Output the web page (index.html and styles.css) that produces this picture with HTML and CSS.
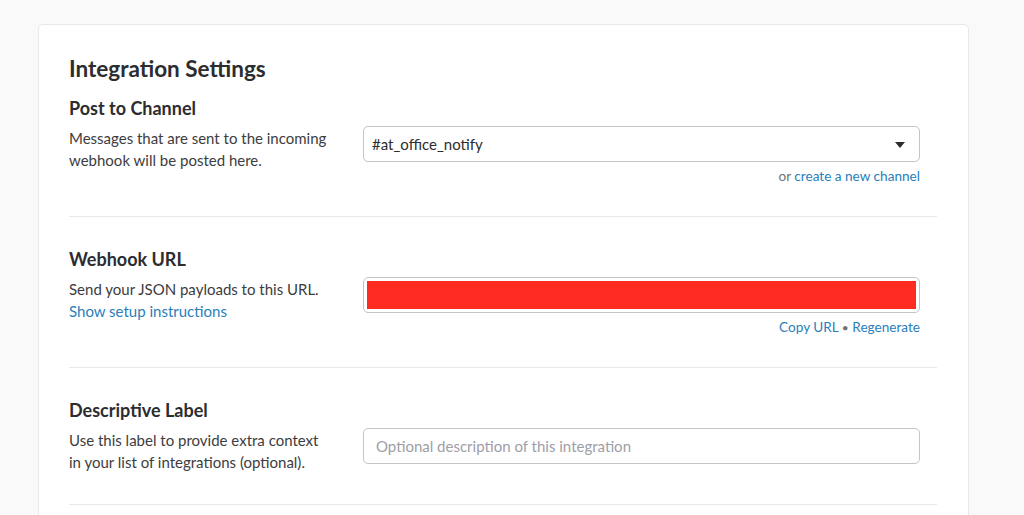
FILE: index.html
```html
<!DOCTYPE html>
<html lang="en">
<head>
<meta charset="UTF-8">
<meta name="viewport" content="width=device-width, initial-scale=1.0">
<title>Integration Settings</title>
<link rel="stylesheet" href="styles.css">
</head>
<body>

<div class="card">
  <div class="section">
    <h2 class="title">Integration Settings</h2>
    <h3 class="label">Post to Channel</h3>
    <div class="row">
      <p class="desc">Messages that are sent to the incoming webhook will be posted here.</p>
      <div class="control">
        <div class="select">
          <span>#at_office_notify</span>
          <span class="caret"></span>
        </div>
        <p class="help">or <a href="#">create a new channel</a></p>
      </div>
    </div>
  </div>

  <div class="section">
    <h3 class="label">Webhook URL</h3>
    <div class="row">
      <p class="desc">Send your JSON payloads to this URL.<br><a href="#">Show setup instructions</a></p>
      <div class="control">
        <div class="input url"><div class="redacted"></div></div>
        <p class="help"><a href="#">Copy URL</a> <span class="dot">&bull;</span> <a href="#">Regenerate</a></p>
      </div>
    </div>
  </div>

  <div class="section">
    <h3 class="label">Descriptive Label</h3>
    <div class="row">
      <p class="desc">Use this label to provide extra context in your list of integrations (optional).</p>
      <div class="control">
        <input class="input" type="text" placeholder="Optional description of this integration">
      </div>
    </div>
  </div>
</div>

</body>
</html>
```

FILE: styles.css
```css
* {
  box-sizing: border-box;
}
body {
  font-family: Lato, "Open Sans", sans-serif;
  margin: 0;
  padding: 0;
  background-color: #f9f9f9;
  color: #2c2d30;
}
a {
  color: #2a80b9;
  text-decoration: none;
}
.card {
  width: 931px;
  margin: 24px 0 0 38px;
  padding: 0 31px 0 30px;
  background-color: #fff;
  border: 1px solid #e8e8e8;
  border-radius: 5px;
  height: 500px;
}
.section {
  padding: 30px 0 30px;
  border-bottom: 1px solid #e8e8e8;
}
.section:last-child {
  padding-bottom: 31px;
}
.title {
  font-size: 22.5px;
  font-weight: 700;
  line-height: 28px;
  margin: 0 0 13px;
}
.label {
  font-size: 18px;
  font-weight: 700;
  line-height: 24px;
  margin: 0 0 7px;
}
.row {
  display: grid;
  grid-template-columns: 294px 557px;
}
.desc {
  margin: 0;
  font-size: 15px;
  line-height: 22px;
  color: #3d3c40;
  padding-right: 34px;
}
.control {
  margin-top: -1px;
}
.select, .input {
  display: flex;
  align-items: center;
  width: 100%;
  height: 36px;
  border: 1px solid #c5c5c5;
  border-radius: 5px;
  background: #fff;
  font-family: inherit;
  font-size: 15px;
  color: #2c2d30;
}
.select {
  justify-content: space-between;
  padding: 0 14px 0 8px;
}
.caret {
  width: 0;
  height: 0;
  border-left: 5px solid transparent;
  border-right: 5px solid transparent;
  border-top: 6px solid #2c2d30;
  margin-top: 2px;
}
.url {
  padding: 3px;
}
.redacted {
  width: 100%;
  height: 100%;
  background-color: #ff2a20;
}
input.input {
  padding: 0 12px;
  outline: none;
}
input.input::placeholder {
  color: #9e9ea6;
}
.help {
  margin: 4px 0 0;
  text-align: right;
  font-size: 13.6px;
  line-height: 20px;
  height: 20px;
  color: #717274;
}
.dot {
  color: #717274;
  font-size: 12px;
  line-height: 1;
}
```
